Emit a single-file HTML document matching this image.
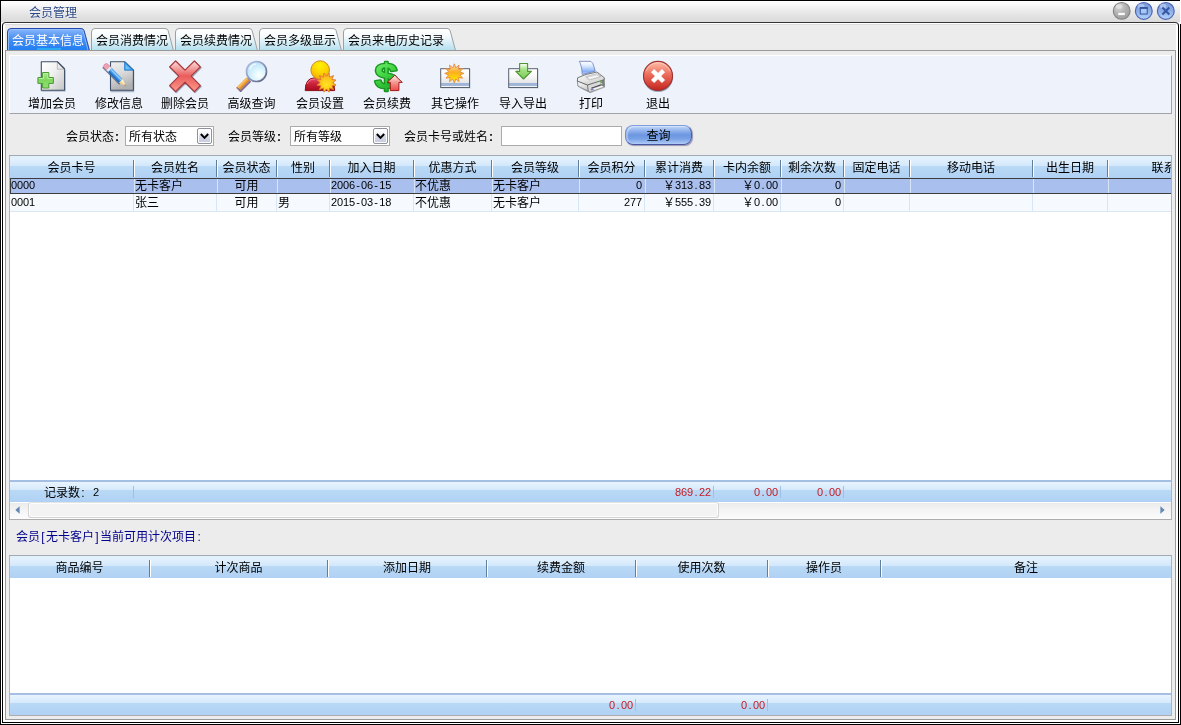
<!DOCTYPE html>
<html lang="zh-CN">
<head>
<meta charset="utf-8">
<title>会员管理</title>
<style>
html,body{margin:0;padding:0;}
body{width:1181px;height:725px;overflow:hidden;background:#fff;position:relative;
  font-family:"Liberation Sans","Noto Sans CJK SC",sans-serif;font-size:12px;color:#000;line-height:14px;}
.abs{position:absolute;}
div,span,i,b{box-sizing:border-box;}
/* outer lines */
#otop{left:0;top:0;width:1180px;height:1px;background:#000;}
#oleft{left:0;top:0;width:1px;height:725px;background:#000;}
#obot{left:0;top:724px;width:1181px;height:1px;background:#000;}
#oright{left:1180px;top:24px;width:1px;height:701px;background:#000;}
#title{left:1px;top:1px;width:1179px;height:21px;background:linear-gradient(#ffffff 0%,#fbfbfb 12%,#f3f3f3 30%,#e9e9e9 52%,#e1e1e1 76%,#dadada 100%);}
#title .cap{left:28px;top:5px;color:#2b4784;text-shadow:0 0 2px #fff;font-size:12px;line-height:14px;white-space:nowrap;}
#frame{left:2px;top:22px;width:1177px;height:701px;border:1px solid #000;border-top-color:#333;border-radius:4px 4px 0 0;background:#fff;}
#strip{left:5px;top:24px;width:1171px;height:27px;background:#ececec;border-top:1px solid #dcdcdc;}
#page{left:5px;top:50px;width:1171px;height:670px;border:1px solid #999;background:#ececec;}
/* tabs */
.tab{top:28px;height:22px;}
.tab svg{position:absolute;left:0;top:0;}
.tab span{position:absolute;left:5px;top:6px;white-space:nowrap;line-height:14px;}
.tab.act span{color:#fff;}
/* toolbar */
#tbar{left:9px;top:55px;width:1163px;height:59px;background:#eef2fa;border-top:1px solid #fff;border-left:1px solid #fff;border-right:1px solid #a0a3a8;border-bottom:1px solid #a0a3a8;}
.tb{top:60px;width:66px;height:52px;}
.tb svg{position:absolute;left:17px;top:0;width:32px;height:33px;overflow:visible;}
.tb span{position:absolute;left:-7px;width:80px;top:37px;text-align:center;white-space:nowrap;line-height:14px;}
/* filter */
.lbl{top:130px;height:14px;text-align:right;white-space:nowrap;}
.combo{top:126px;height:20px;border:1px solid #a9abae;background:#fff;}
.combo span{position:absolute;left:3px;top:3px;line-height:14px;white-space:nowrap;}
.combo i{position:absolute;right:1px;top:1px;width:15px;height:16px;border:1px solid #8f929c;border-radius:2px;background:linear-gradient(#ffffff 0,#f6f7fb 30%,#d6d9e8 55%,#c6cade 100%);box-shadow:inset 0 0 0 1px #fff;}
.combo i svg{position:absolute;left:2px;top:4px;}
#q{left:501px;top:126px;width:121px;height:20px;border:1px solid #a9abae;background:#fff;}
#qbtn{left:625px;top:125px;width:67px;height:20px;border-radius:8px;border:1px solid;border-color:#7d9ddf #4c5ea8 #46559f #6c8ad6;
  background:linear-gradient(#c4d9f8 0%,#98b8ee 22%,#6c96e0 50%,#79a2e6 72%,#b0ccf8 100%);
  box-shadow:1px 1px 1px rgba(100,90,140,.6), inset 2px 1px 1px rgba(255,255,255,.35);text-align:center;line-height:21px;}
/* grids */
.grid{background:#fff;border:1px solid;border-color:#a0a9b4 #b0b3b8 #adadad #b0b3b8;overflow:hidden;}
.ghead{left:0;top:0;height:22px;width:100%;background:linear-gradient(#d6effd 0,#e5f3fd 1px,#d3e8fb 10px,#b9d9f5 10px,#b0d1f4 22px);}
.gfoot{left:0;height:22px;width:100%;border-top:2px solid #a4bfe3;background:linear-gradient(#e8f4fe 0,#d5e9fb 8px,#b9d9f5 8px,#b0d1f4 20px) padding-box;}
.hc{top:5px;height:14px;text-align:center;white-space:nowrap;line-height:14px;}
.hs{top:4px;width:2px;height:17px;border-left:1px solid #5f7f9f;background:#fff;}
.fs{top:4px;width:1px;height:12px;background:#9fc0e6;}
.row{left:0;width:100%;}
.c{top:0;height:100%;white-space:nowrap;overflow:hidden;line-height:14px;}
.vs{top:0;width:1px;background:#d6e6f6;}
.n{font-size:11px;letter-spacing:-.1px;}
.pd{display:inline-block;width:6px;text-align:center;font-weight:normal;letter-spacing:0;}
.c.n{top:-1px;}
span .n{position:relative;top:-1px;}
.hw{display:inline-block;width:6px;text-align:center;font-weight:normal;}
.lbl .hw{text-align:right;padding-right:1px;font-weight:bold;}
.r{text-align:right;}
.red{color:#c41c24;}
</style>
</head>
<body>
<div id="w" style="position:absolute;left:0;top:0;width:1181px;height:725px;will-change:transform">
<div class="abs" id="otop"></div><div class="abs" id="oleft"></div><div class="abs" id="obot"></div><div class="abs" id="oright"></div>
<div class="abs" id="title"><span class="abs cap">会员管理</span></div>
<svg class="abs" style="left:1108px;top:0" width="72" height="22" viewBox="1108 0 72 22">
<defs>
<radialGradient id="gmin" cx="0.35" cy="0.25" r="0.85"><stop offset="0" stop-color="#d8d8d8"/><stop offset="0.45" stop-color="#b4b4b4"/><stop offset="1" stop-color="#9a9a9a"/></radialGradient>
<linearGradient id="gblu" x1="0" y1="0" x2="0" y2="1"><stop offset="0" stop-color="#7c98d8"/><stop offset="0.5" stop-color="#8cadE6"/><stop offset="1" stop-color="#b4d4fc"/></linearGradient>
</defs>
<circle cx="1121.7" cy="10.9" r="8.4" fill="url(#gmin)" stroke="#808080" stroke-width="1.1"/>
<ellipse cx="1119" cy="6.5" rx="3.2" ry="2.3" fill="#e4e4e4" opacity=".75"/>
<rect x="1118.2" y="12.8" width="6.6" height="2.3" fill="#fbfbfb"/>
<circle cx="1143.8" cy="10.9" r="8.4" fill="url(#gblu)" stroke="#4a66b6" stroke-width="1.2"/>
<ellipse cx="1141" cy="6" rx="3.4" ry="2.2" fill="#c4d8f8" opacity=".6"/>
<rect x="1140.3" y="8" width="6.9" height="6" fill="#a9c6f4" stroke="#35559f" stroke-width="1"/>
<rect x="1139.8" y="7" width="7.9" height="1.8" fill="#35559f"/>
<circle cx="1165.8" cy="10.9" r="8.4" fill="url(#gblu)" stroke="#4a66b6" stroke-width="1.2"/>
<ellipse cx="1163" cy="6" rx="3.4" ry="2.2" fill="#c4d8f8" opacity=".6"/>
<path d="M1162.4 7.5 L1169.3 14.4 M1169.3 7.5 L1162.4 14.4" stroke="#3658a6" stroke-width="2.1" fill="none"/>
</svg>
<div class="abs" id="frame"></div>
<div class="abs" id="strip"></div>
<div class="abs" id="page"></div>
<svg width="0" height="0" style="position:absolute"><defs>
<linearGradient id="tgi" x1="0" y1="0" x2="0" y2="1"><stop offset="0" stop-color="#ffffff"/><stop offset="0.35" stop-color="#f6fbfd"/><stop offset="1" stop-color="#b2dfee"/></linearGradient>
<linearGradient id="tga" x1="0" y1="0" x2="0" y2="1"><stop offset="0" stop-color="#8ab6fa"/><stop offset="0.45" stop-color="#4c90f0"/><stop offset="1" stop-color="#1f7df2"/></linearGradient>
</defs></svg>
<div class="abs tab act" style="left:7px;width:83px"><svg width="83" height="22" viewBox="0 0 83 22"><path d="M0.5 22.5 L0.5 4 Q0.5 0.5 4 0.5 L74 0.5 Q76.4 0.5 77.1 2.6 L82.5 22.5 Z" fill="url(#tga)"/><path d="M1.5 22.5 L1.5 4.5 Q1.5 1.5 4.5 1.5 L73.5 1.5 Q75.6 1.5 76.2 3.2 L81.2 22.5" fill="none" stroke="#9cc6ff" stroke-width="1" opacity=".8"/><path d="M0.5 22.5 L0.5 4 Q0.5 0.5 4 0.5 L74 0.5 Q76.4 0.5 77.1 2.6 L82.5 22.5" fill="none" stroke="#2748ad" stroke-width="1"/><rect x="30" y="20" width="24" height="2" fill="#2cb4f4" opacity=".8"/></svg><span>会员基本信息</span></div>
<div class="abs tab" style="left:91px;width:83px"><svg width="83" height="22" viewBox="0 0 83 22"><path d="M0.5 22.5 L0.5 4 Q0.5 0.5 4 0.5 L74 0.5 Q76.4 0.5 77.1 2.6 L82.5 22.5 Z" fill="url(#tgi)"/><path d="M0.5 22.5 L0.5 4 Q0.5 0.5 4 0.5 L74 0.5 Q76.4 0.5 77.1 2.6 L82.5 22.5" fill="none" stroke="#9c9fa3" stroke-width="1"/></svg><span>会员消费情况</span></div>
<div class="abs tab" style="left:175px;width:83px"><svg width="83" height="22" viewBox="0 0 83 22"><path d="M0.5 22.5 L0.5 4 Q0.5 0.5 4 0.5 L74 0.5 Q76.4 0.5 77.1 2.6 L82.5 22.5 Z" fill="url(#tgi)"/><path d="M0.5 22.5 L0.5 4 Q0.5 0.5 4 0.5 L74 0.5 Q76.4 0.5 77.1 2.6 L82.5 22.5" fill="none" stroke="#9c9fa3" stroke-width="1"/></svg><span>会员续费情况</span></div>
<div class="abs tab" style="left:259px;width:83px"><svg width="83" height="22" viewBox="0 0 83 22"><path d="M0.5 22.5 L0.5 4 Q0.5 0.5 4 0.5 L74 0.5 Q76.4 0.5 77.1 2.6 L82.5 22.5 Z" fill="url(#tgi)"/><path d="M0.5 22.5 L0.5 4 Q0.5 0.5 4 0.5 L74 0.5 Q76.4 0.5 77.1 2.6 L82.5 22.5" fill="none" stroke="#9c9fa3" stroke-width="1"/></svg><span>会员多级显示</span></div>
<div class="abs tab" style="left:343px;width:113px"><svg width="113" height="22" viewBox="0 0 113 22"><path d="M0.5 22.5 L0.5 4 Q0.5 0.5 4 0.5 L104 0.5 Q106.4 0.5 107.1 2.6 L112.5 22.5 Z" fill="url(#tgi)"/><path d="M0.5 22.5 L0.5 4 Q0.5 0.5 4 0.5 L104 0.5 Q106.4 0.5 107.1 2.6 L112.5 22.5" fill="none" stroke="#9c9fa3" stroke-width="1"/></svg><span>会员来电历史记录</span></div>

<svg width="0" height="0" style="position:absolute"><defs>
<linearGradient id="gdoc" x1="0" y1="0" x2="1" y2="1"><stop offset="0" stop-color="#ffffff"/><stop offset="0.45" stop-color="#f0f0f0"/><stop offset="1" stop-color="#c4c4c4"/></linearGradient>
<linearGradient id="gdoc2" x1="0" y1="0" x2="0.3" y2="1"><stop offset="0" stop-color="#f2f2f2"/><stop offset="0.5" stop-color="#dadada"/><stop offset="1" stop-color="#b0b0b0"/></linearGradient>
<linearGradient id="gplus" x1="0" y1="0" x2="0" y2="1"><stop offset="0" stop-color="#a6ea86"/><stop offset="0.5" stop-color="#7fd65e"/><stop offset="1" stop-color="#8fe070"/></linearGradient>
<linearGradient id="gx" x1="0" y1="0" x2="0" y2="1"><stop offset="0" stop-color="#fbe4e2"/><stop offset="0.5" stop-color="#ea5a5a"/><stop offset="1" stop-color="#fa9a88"/></linearGradient>
<radialGradient id="glens" cx="0.62" cy="0.68" r="0.75"><stop offset="0" stop-color="#ffffff"/><stop offset="0.45" stop-color="#d8f4fd"/><stop offset="1" stop-color="#b4ddf6"/></radialGradient>
<linearGradient id="gring" x1="0" y1="0" x2="1" y2="1"><stop offset="0" stop-color="#b4c2e6"/><stop offset="0.5" stop-color="#8e98c0"/><stop offset="1" stop-color="#5c5c78"/></linearGradient>
<radialGradient id="ghead" cx="0.5" cy="0.25" r="0.8"><stop offset="0" stop-color="#fff200"/><stop offset="0.55" stop-color="#fdd000"/><stop offset="1" stop-color="#f09a10"/></radialGradient>
<linearGradient id="gbody" x1="0" y1="0" x2="0" y2="1"><stop offset="0" stop-color="#e85070"/><stop offset="0.5" stop-color="#c82038"/><stop offset="1" stop-color="#a80c1c"/></linearGradient>
<radialGradient id="gstar" cx="0.5" cy="0.6" r="0.6"><stop offset="0" stop-color="#ffe620"/><stop offset="0.55" stop-color="#fec41c"/><stop offset="1" stop-color="#f59a38"/></radialGradient>
<linearGradient id="gsun" x1="0" y1="0" x2="0" y2="1"><stop offset="0" stop-color="#ffd6b0"/><stop offset="0.45" stop-color="#fbb020"/><stop offset="0.8" stop-color="#ffdc00"/><stop offset="1" stop-color="#ffc820"/></linearGradient>
<linearGradient id="gdol" x1="0" y1="0" x2="0.4" y2="1"><stop offset="0" stop-color="#8af682"/><stop offset="0.5" stop-color="#48d848"/><stop offset="1" stop-color="#1cac28"/></linearGradient>
<linearGradient id="garr" x1="0" y1="0" x2="0" y2="1"><stop offset="0" stop-color="#fff4f2"/><stop offset="0.45" stop-color="#f59a94"/><stop offset="1" stop-color="#ee4848"/></linearGradient>
<linearGradient id="gbox" x1="0" y1="0" x2="0" y2="1"><stop offset="0" stop-color="#ffffff"/><stop offset="0.35" stop-color="#fafafa"/><stop offset="0.74" stop-color="#e6e6e8"/><stop offset="0.75" stop-color="#9cb2d4"/><stop offset="0.93" stop-color="#a6badb"/><stop offset="0.94" stop-color="#eef2f8"/><stop offset="1" stop-color="#ffffff"/></linearGradient>
<linearGradient id="gdown" x1="0" y1="0" x2="0" y2="1"><stop offset="0" stop-color="#f6fff0"/><stop offset="0.4" stop-color="#a4e084"/><stop offset="1" stop-color="#74cc50"/></linearGradient>
<linearGradient id="gpaper" x1="0" y1="0" x2="0" y2="1"><stop offset="0" stop-color="#ffffff"/><stop offset="0.3" stop-color="#e2eeff"/><stop offset="0.78" stop-color="#86b0f6"/><stop offset="1" stop-color="#c4d8fa"/></linearGradient>
<linearGradient id="glid" x1="0" y1="0" x2="0.6" y2="1"><stop offset="0" stop-color="#fbfbfb"/><stop offset="0.6" stop-color="#e6e6e6"/><stop offset="1" stop-color="#cdcdcd"/></linearGradient>
<linearGradient id="gfront" x1="0" y1="0" x2="0.4" y2="1"><stop offset="0" stop-color="#ffffff"/><stop offset="1" stop-color="#cfcfcf"/></linearGradient>
<linearGradient id="gexit" x1="0" y1="0" x2="0" y2="1"><stop offset="0" stop-color="#ffc0a8"/><stop offset="0.45" stop-color="#ec6e5e"/><stop offset="1" stop-color="#c4241e"/></linearGradient>
<linearGradient id="ghandle" x1="0" y1="0" x2="0" y2="1"><stop offset="0" stop-color="#6a5c86"/><stop offset="0.2" stop-color="#8a7aa0"/><stop offset="0.42" stop-color="#e08c2a"/><stop offset="0.65" stop-color="#f4a63a"/><stop offset="0.82" stop-color="#f9c67a"/><stop offset="1" stop-color="#f0a238"/></linearGradient><linearGradient id="gxr" gradientUnits="userSpaceOnUse" x1="5" y1="5" x2="27" y2="27"><stop offset="0" stop-color="#fbe6e4"/><stop offset="0.5" stop-color="#ea5c5c"/><stop offset="1" stop-color="#fa9c8a"/></linearGradient></defs></svg>
<div class="abs" id="tbar"></div>
<div class="abs tb" style="left:19px"><svg viewBox="0 0 32 33"><path d="M5.3 31.8 H29.6 V10 L21.6 2 H5.3 Z" fill="#8b98ad" opacity=".55"/>
<path d="M5.3 1.7 H21.3 L28.6 9 V30.3 H5.3 Z" fill="url(#gdoc)" stroke="#3e4f66" stroke-width="1.1" stroke-linejoin="round"/>
<path d="M21.3 1.9 V9.2 H28.4 Z" fill="#e9e9e9" stroke="#9a9a9a" stroke-width=".6"/>
<path d="M21.3 1.7 L28.6 9" stroke="#3e4f66" stroke-width="1.1" fill="none"/>
<path d="M6.6 12.5 H12.8 V17.5 H17.4 V23.4 H12.8 V28 H6.6 V23.4 H1.9 V17.5 H6.6 Z" fill="url(#gplus)" stroke="#4c9a34" stroke-width="1" stroke-linejoin="round"/>
<path d="M7.6 13.5 H11.8 V18.5 H16.4 M7.6 13.5 V18.5 H2.9" fill="none" stroke="#c4f4ae" stroke-width=".8" opacity=".9"/></svg><span>增加会员</span></div>
<div class="abs tb" style="left:86px"><svg viewBox="0 0 32 33"><path d="M7.5 32.2 H31.3 V10 L23.5 2.5 H7.5 Z" fill="#7f8ea6" opacity=".6"/>
<path d="M7.5 1.7 H21.6 L30.4 10.2 V30.2 H7.5 Z" fill="url(#gdoc2)" stroke="#3e4f66" stroke-width="1.1" stroke-linejoin="round"/>
<path d="M21.6 1.9 L30.2 10.2 H21.6 Z" fill="#38a0f2" stroke="#2276c8" stroke-width=".8" stroke-linejoin="round"/>
<path d="M22.6 4.4 L27.6 9.2 H22.6 Z" fill="#6cc0fa"/>
<g transform="rotate(45.2 3.2 6.2)">
<rect x="1.5" y="8.6" width="24" height="1.5" fill="#3c526e" opacity=".75"/>
<path d="M2.8 3.6 H6 V8.8 H2.8 Q0.7 8.8 0.7 6.2 Q0.7 3.6 2.8 3.6 Z" fill="#f0a2b4" stroke="#c86a84" stroke-width=".5"/>
<rect x="6" y="3.6" width="2.8" height="5.2" fill="#e6eaf0" stroke="#9aa4b4" stroke-width=".4"/>
<rect x="8.8" y="3.6" width="15.2" height="5.2" fill="#3f93ea"/>
<rect x="8.8" y="4.3" width="15.2" height="1.6" fill="#8ccafc"/>
<rect x="8.8" y="7.5" width="15.2" height="1.3" fill="#1f66bc"/>
<path d="M24 3.6 L31.3 6.2 L24 8.8 Z" fill="#f4d48c"/>
<path d="M24 3.6 L31.3 6.2 L24 6.2 Z" fill="#fdeec4"/>
<path d="M29.2 5.5 L31.5 6.2 L29.2 6.9 Z" fill="#8a6a48"/>
</g></svg><span>修改信息</span></div>
<div class="abs tb" style="left:152px"><svg viewBox="0 0 32 33"><g transform="rotate(45 16 16.2)">
<path d="M11.75 -1.3 H20.25 V11.95 H33.5 V20.45 H20.25 V33.7 H11.75 V20.45 H-1.5 V11.95 H11.75 Z" fill="#56567e" opacity=".5" transform="translate(1.1 0.2)" stroke="#56567e" stroke-width="1.6" stroke-linejoin="round"/>
</g>
<g transform="rotate(45 16 16.2)">
<path d="M11.75 -1.3 H20.25 V11.95 H33.5 V20.45 H20.25 V33.7 H11.75 V20.45 H-1.5 V11.95 H11.75 Z" fill="#e66" stroke="#a33a3e" stroke-width="1.2" stroke-linejoin="round"/>
</g>
<g transform="rotate(45 16 16.2)"><path d="M12.55 -0.5 H19.45 V12.75 H32.7 V19.65 H19.45 V32.9 H12.55 V19.65 H-0.7 V12.75 H12.55 Z" fill="url(#gxr)"/></g></svg><span>删除会员</span></div>
<div class="abs tb" style="left:218.5px"><svg viewBox="0 0 32 33"><g transform="translate(13 19.4) rotate(135)"><rect x="0" y="-3.2" width="15" height="6.4" rx="0.8" fill="url(#ghandle)"/><rect x="13.6" y="-3.2" width="1.4" height="6.4" rx="0.6" fill="#7a6c94" opacity=".85"/></g>
<path d="M15.2 16.6 L12.4 19.6" stroke="#8a8aa8" stroke-width="3.4"/>
<circle cx="20.5" cy="11.5" r="10" fill="url(#glens)" stroke="url(#gring)" stroke-width="1.7"/>
<path d="M13.8 9.5 Q14.8 4.6 20 3.8" fill="none" stroke="#ffffff" stroke-width="1.3" opacity=".85"/></svg><span>高级查询</span></div>
<div class="abs tb" style="left:287px"><svg viewBox="0 0 32 33"><path d="M1.2 30.6 Q1.2 17.8 11 17.8 H21 Q30.6 17.8 30.6 30.6 Z" fill="url(#gbody)" stroke="#8e1018" stroke-width="1"/>
<path d="M3 24 Q5 19 11 19" fill="none" stroke="#f58aa0" stroke-width="1" opacity=".8"/>
<circle cx="16.2" cy="10.1" r="9.3" fill="url(#ghead)" stroke="#cf8a22" stroke-width="1"/>
<polygon points="25.06,13.04 25.65,17.14 29.50,15.60 27.96,19.45 32.06,20.04 28.80,22.60 32.06,25.16 27.96,25.75 29.50,29.60 25.65,28.06 25.06,32.16 22.50,28.90 19.94,32.16 19.35,28.06 15.50,29.60 17.04,25.75 12.94,25.16 16.20,22.60 12.94,20.04 17.04,19.45 15.50,15.60 19.35,17.14 19.94,13.04 22.50,16.30" fill="url(#gstar)" stroke="#df7c28" stroke-width=".9" stroke-linejoin="miter"/></svg><span>会员设置</span></div>
<div class="abs tb" style="left:354px"><svg viewBox="0 0 32 33"><g transform="translate(15.2 0) scale(1.16 1)"><text x="0" y="28" text-anchor="middle" font-family="Liberation Sans, sans-serif" font-weight="bold" font-size="35.5" fill="url(#gdol)" stroke="#18961f" stroke-width="2.6" paint-order="stroke" stroke-linejoin="round">$</text></g>
<path d="M23.8 15.2 L31.3 22.4 H27.9 V30.6 H19.3 V22.4 H16.2 Z" fill="url(#garr)" stroke="#a21a1c" stroke-width="1" stroke-linejoin="miter"/></svg><span>会员续费</span></div>
<div class="abs tb" style="left:422px"><svg viewBox="0 0 32 33"><rect x="1.9" y="9" width="29.6" height="19.4" fill="#8a97ac" opacity=".45"/>
<rect x="1.7" y="8.7" width="28.8" height="18.8" fill="url(#gbox)" stroke="#59626f" stroke-width="1"/>
<polygon points="15.30,3.80 16.80,7.80 20.10,5.09 19.40,9.30 23.61,8.60 20.90,11.90 24.90,13.40 20.90,14.90 23.61,18.20 19.40,17.50 20.10,21.71 16.80,19.00 15.30,23.00 13.80,19.00 10.50,21.71 11.20,17.50 6.99,18.20 9.70,14.90 5.70,13.40 9.70,11.90 6.99,8.60 11.20,9.30 10.50,5.09 13.80,7.80" fill="url(#gsun)" stroke="#e38a42" stroke-width=".9"/></svg><span>其它操作</span></div>
<div class="abs tb" style="left:490px"><svg viewBox="0 0 32 33"><rect x="1.9" y="9" width="29.6" height="19.4" fill="#8a97ac" opacity=".45"/>
<rect x="1.7" y="8.7" width="28.8" height="18.8" fill="url(#gbox)" stroke="#59626f" stroke-width="1"/>
<path d="M12.6 3.6 H20.6 V11.4 H24.4 L16.5 19 L8.8 11.4 H12.6 Z" fill="url(#gdown)" stroke="#4f9434" stroke-width="1.1" stroke-linejoin="round"/>
<path d="M13.7 4.7 H19.5" stroke="#ffffff" stroke-width="1" opacity=".9"/></svg><span>导入导出</span></div>
<div class="abs tb" style="left:558px"><svg viewBox="0 0 32 33"><polygon points="2.62,26.90 15.31,33.24 30.21,27.45 29.66,25.79 15.31,31.31" fill="#55586a" opacity=".35"/><polygon points="2.34,20.83 12.55,24.97 13.38,31.31 2.90,26.07" fill="url(#gfront)" stroke="#6a6a6a" stroke-width=".7"/><polygon points="12.55,24.97 29.10,18.90 29.54,26.34 15.31,32.14 13.38,31.31" fill="#d9d9d9" stroke="#6a6a6a" stroke-width=".7"/><polygon points="26.90,19.72 29.10,18.90 29.54,26.34 27.45,27.17" fill="#7e7e7e"/><polygon points="16.14,27.72 26.07,24.14 28.28,25.52 17.79,29.66" fill="#3c3c46"/><polygon points="17.24,28.55 26.90,25.13 29.10,26.90 19.17,30.48" fill="#f4f4f4" stroke="#8a8a8a" stroke-width=".5"/><polygon points="15.31,29.10 17.79,28.28 18.62,29.66 16.14,30.48" fill="#7c84c8"/><polygon points="2.62,17.79 10.90,14.48 21.93,12.00 29.38,17.79 29.10,19.72 12.55,24.97 2.34,21.10" fill="url(#glid)" stroke="#5a5a5a" stroke-width=".8" stroke-linejoin="round"/><polygon points="10.62,16.69 21.93,13.66 26.07,16.41 14.21,20.00" fill="#ececec" stroke="#9a9a9a" stroke-width=".5"/><polygon points="12.00,17.52 21.93,15.03 24.69,16.69 14.48,19.45" fill="#fafafa" stroke="#aaaaaa" stroke-width=".4"/><polygon points="25.24,20.55 26.90,20.00 27.01,23.03 25.35,23.59" fill="#58b048"/><path d="M4.28 1.35 Q6.48 4.28 7.31 14.48 L20.28 11.17 L18.90 6.48 Q18.07 2.62 15.86 1.35 Z" fill="url(#gpaper)" stroke="#6c7cb4" stroke-width=".8" stroke-linejoin="round"/></svg><span>打印</span></div>
<div class="abs tb" style="left:625px"><svg viewBox="0 0 32 33"><circle cx="16.2" cy="17.2" r="14.8" fill="#5a6a94" opacity=".6"/>
<circle cx="16" cy="15.9" r="14.5" fill="url(#gexit)" stroke="#9e3030" stroke-width="1.1"/>
<path d="M4 11 Q8 3 16 2.6 Q24 3 28 11" fill="none" stroke="#ffd8c8" stroke-width="1" opacity=".55"/>
<path d="M10.6 10.6 L21.5 21.5 M21.5 10.6 L10.6 21.5" stroke="#ffffff" stroke-width="4.4" stroke-linecap="butt"/></svg><span>退出</span></div>

<div class="abs lbl" style="left:40px;width:80px">会员状态<b class="hw">:</b></div>
<div class="abs combo" style="left:125px;width:89px"><span>所有状态</span><i><svg width="9" height="7" viewBox="0 0 9 7"><path d="M0.8 1 L4.5 4.9 L8.2 1" fill="none" stroke="#000" stroke-width="2"/></svg></i></div>
<div class="abs lbl" style="left:202px;width:80px">会员等级<b class="hw">:</b></div>
<div class="abs combo" style="left:290px;width:100px"><span>所有等级</span><i><svg width="9" height="7" viewBox="0 0 9 7"><path d="M0.8 1 L4.5 4.9 L8.2 1" fill="none" stroke="#000" stroke-width="2"/></svg></i></div>
<div class="abs lbl" style="left:394px;width:100px">会员卡号或姓名<b class="hw">:</b></div>
<div class="abs" id="q"></div>
<div class="abs" id="qbtn">查询</div>

<div class="abs grid" id="g1" style="left:9px;top:155px;width:1163px;height:365px">
<div class="abs ghead"><span class="abs hc" style="left:0px;width:123px">会员卡号</span><i class="abs hs" style="left:123px"></i><span class="abs hc" style="left:124px;width:82px">会员姓名</span><i class="abs hs" style="left:206px"></i><span class="abs hc" style="left:207px;width:59px">会员状态</span><i class="abs hs" style="left:266px"></i><span class="abs hc" style="left:267px;width:52px">性别</span><i class="abs hs" style="left:319px"></i><span class="abs hc" style="left:320px;width:83px">加入日期</span><i class="abs hs" style="left:403px"></i><span class="abs hc" style="left:404px;width:77px">优惠方式</span><i class="abs hs" style="left:481px"></i><span class="abs hc" style="left:482px;width:86px">会员等级</span><i class="abs hs" style="left:568px"></i><span class="abs hc" style="left:569px;width:65px">会员积分</span><i class="abs hs" style="left:634px"></i><span class="abs hc" style="left:635px;width:68px">累计消费</span><i class="abs hs" style="left:703px"></i><span class="abs hc" style="left:704px;width:66px">卡内余额</span><i class="abs hs" style="left:770px"></i><span class="abs hc" style="left:771px;width:62px">剩余次数</span><i class="abs hs" style="left:833px"></i><span class="abs hc" style="left:834px;width:65px">固定电话</span><i class="abs hs" style="left:899px"></i><span class="abs hc" style="left:900px;width:122px">移动电话</span><i class="abs hs" style="left:1022px"></i><span class="abs hc" style="left:1023px;width:74px">出生日期</span><i class="abs hs" style="left:1097px"></i><span class="abs hc" style="left:1098px;width:135px">联系地址</span><i class="abs hs" style="left:1233px"></i></div>
<div class="abs row" style="top:22px;height:16px;background:#a9c0ef;border-top:1px solid #3c3c3c;border-bottom:1px solid #3c3c3c;border-left:1px solid #3c3c3c"><i class="abs vs" style="left:123px;height:14px"></i><i class="abs vs" style="left:206px;height:14px"></i><i class="abs vs" style="left:266px;height:14px"></i><i class="abs vs" style="left:319px;height:14px"></i><i class="abs vs" style="left:403px;height:14px"></i><i class="abs vs" style="left:481px;height:14px"></i><i class="abs vs" style="left:568px;height:14px"></i><i class="abs vs" style="left:634px;height:14px"></i><i class="abs vs" style="left:703px;height:14px"></i><i class="abs vs" style="left:770px;height:14px"></i><i class="abs vs" style="left:833px;height:14px"></i><i class="abs vs" style="left:899px;height:14px"></i><i class="abs vs" style="left:1022px;height:14px"></i><i class="abs vs" style="left:1097px;height:14px"></i><i class="abs vs" style="left:1233px;height:14px"></i><div class="abs" style="left:-1px;top:0;width:1400px;height:14px"><span class="abs c n" style="left:1px;width:122px">0000</span><span class="abs c" style="left:125px;width:81px">无卡客户</span><span class="abs c" style="left:207px;width:59px;text-align:center">可用</span><span class="abs c n" style="left:321px;width:82px;">2006<b class="pd">-</b>06<b class="pd">-</b>15</span><span class="abs c" style="left:405px;width:76px">不优惠</span><span class="abs c" style="left:483px;width:85px">无卡客户</span><span class="abs c n r" style="left:569px;width:63px">0</span><span class="abs c r" style="left:635px;width:66px">￥<span class="n">313<b class="pd">.</b>83</span></span><span class="abs c r" style="left:704px;width:64px">￥<span class="n">0<b class="pd">.</b>00</span></span><span class="abs c n r" style="left:771px;width:60px">0</span></div></div>
<div class="abs row" style="top:38px;height:18px;background:#f6fafe;border-bottom:1px solid #d9e6f4"><i class="abs vs" style="left:123px;height:17px"></i><i class="abs vs" style="left:206px;height:17px"></i><i class="abs vs" style="left:266px;height:17px"></i><i class="abs vs" style="left:319px;height:17px"></i><i class="abs vs" style="left:403px;height:17px"></i><i class="abs vs" style="left:481px;height:17px"></i><i class="abs vs" style="left:568px;height:17px"></i><i class="abs vs" style="left:634px;height:17px"></i><i class="abs vs" style="left:703px;height:17px"></i><i class="abs vs" style="left:770px;height:17px"></i><i class="abs vs" style="left:833px;height:17px"></i><i class="abs vs" style="left:899px;height:17px"></i><i class="abs vs" style="left:1022px;height:17px"></i><i class="abs vs" style="left:1097px;height:17px"></i><i class="abs vs" style="left:1233px;height:17px"></i><div class="abs" style="left:0;top:2px;width:1400px;height:14px"><span class="abs c n" style="left:1px;width:122px">0001</span><span class="abs c" style="left:125px;width:81px">张三</span><span class="abs c" style="left:207px;width:59px;text-align:center">可用</span><span class="abs c" style="left:268px;width:51px">男</span><span class="abs c n" style="left:321px;width:82px;">2015<b class="pd">-</b>03<b class="pd">-</b>18</span><span class="abs c" style="left:405px;width:76px">不优惠</span><span class="abs c" style="left:483px;width:85px">无卡客户</span><span class="abs c n r" style="left:569px;width:63px">277</span><span class="abs c r" style="left:635px;width:66px">￥<span class="n">555<b class="pd">.</b>39</span></span><span class="abs c r" style="left:704px;width:64px">￥<span class="n">0<b class="pd">.</b>00</span></span><span class="abs c n r" style="left:771px;width:60px">0</span></div></div>
<div class="abs gfoot" style="top:324px"><span class="abs" style="left:34px;top:4px;white-space:nowrap;line-height:14px">记录数<b class="hw">:</b><b class="hw"> </b><span class="n" style="margin-left:1px">2</span></span><i class="abs fs" style="left:123px"></i><i class="abs fs" style="left:703px"></i><i class="abs fs" style="left:770px"></i><i class="abs fs" style="left:833px"></i><span class="abs n r red" style="left:641px;width:60px;top:3px;line-height:14px">869<b class="pd">.</b>22</span><span class="abs n r red" style="left:708px;width:60px;top:3px;line-height:14px">0<b class="pd">.</b>00</span><span class="abs n r red" style="left:771px;width:60px;top:3px;line-height:14px">0<b class="pd">.</b>00</span></div>
<div class="abs" style="left:0;top:346px;width:100%;height:17px;background:linear-gradient(#ffffff 0,#ffffff 1px,#ebebeb 1px,#f4f4f4 8px,#fcfcfc 17px)"><svg class="abs" style="left:5px;top:4px" width="5" height="8" viewBox="0 0 5 8"><path d="M4.6 0.2 L0.3 4 L4.6 7.8 Z" fill="#6288b0"/></svg><svg class="abs" style="left:1150px;top:4px" width="5" height="8" viewBox="0 0 5 8"><path d="M0.4 0.2 L4.7 4 L0.4 7.8 Z" fill="#6288b0"/></svg><div class="abs" style="left:18px;top:0;width:691px;height:16px;border:1px solid #d4d4d4;border-top-color:#e4e4e4;border-radius:3px;background:#f3f3f3;box-shadow:inset 0 0 0 1px #fdfdfd"></div></div>
</div>
<div class="abs" style="left:16px;top:530px;color:#00008a;white-space:nowrap;line-height:14px">会员<b class="hw">[</b>无卡客户<b class="hw">]</b>当前可用计次项目<b class="hw">:</b></div>

<div class="abs grid" id="g2" style="left:9px;top:555px;width:1163px;height:161px">
<div class="abs ghead"><span class="abs hc" style="left:0px;width:139px">商品编号</span><i class="abs hs" style="left:139px"></i><span class="abs hc" style="left:140px;width:177px">计次商品</span><i class="abs hs" style="left:317px"></i><span class="abs hc" style="left:318px;width:158px">添加日期</span><i class="abs hs" style="left:476px"></i><span class="abs hc" style="left:477px;width:148px">续费金额</span><i class="abs hs" style="left:625px"></i><span class="abs hc" style="left:626px;width:131px">使用次数</span><i class="abs hs" style="left:757px"></i><span class="abs hc" style="left:758px;width:112px">操作员</span><i class="abs hs" style="left:870px"></i><span class="abs hc" style="left:871px;width:290px">备注</span></div>
<div class="abs gfoot" style="top:137px"><i class="abs fs" style="left:625px"></i><i class="abs fs" style="left:757px"></i><span class="abs n r red" style="left:563px;width:60px;top:3px;line-height:14px">0<b class="pd">.</b>00</span><span class="abs n r red" style="left:695px;width:60px;top:3px;line-height:14px">0<b class="pd">.</b>00</span></div>
</div>

</div>
</body>
</html>
